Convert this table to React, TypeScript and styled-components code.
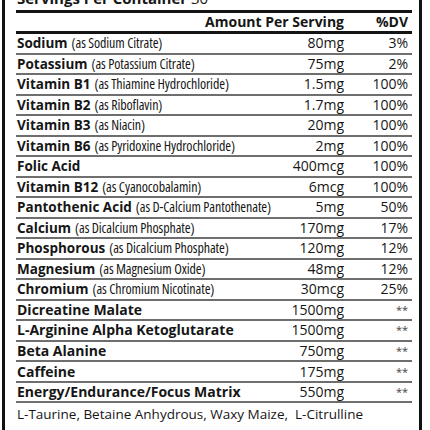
import styled, { createGlobalStyle } from "styled-components";

type Nutrient = {
  name: string;
  source?: string;
  amount: string;
  dv: string;
};

const nutrients: Nutrient[] = [
  { name: "Sodium", source: "(as Sodium Citrate)", amount: "80mg", dv: "3%" },
  { name: "Potassium", source: "(as Potassium Citrate)", amount: "75mg", dv: "2%" },
  { name: "Vitamin B1", source: "(as Thiamine Hydrochloride)", amount: "1.5mg", dv: "100%" },
  { name: "Vitamin B2", source: "(as Riboflavin)", amount: "1.7mg", dv: "100%" },
  { name: "Vitamin B3", source: "(as Niacin)", amount: "20mg", dv: "100%" },
  { name: "Vitamin B6", source: "(as Pyridoxine Hydrochloride)", amount: "2mg", dv: "100%" },
  { name: "Folic Acid", amount: "400mcg", dv: "100%" },
  { name: "Vitamin B12", source: "(as Cyanocobalamin)", amount: "6mcg", dv: "100%" },
  { name: "Pantothenic Acid", source: "(as D-Calcium Pantothenate)", amount: "5mg", dv: "50%" },
  { name: "Calcium", source: "(as Dicalcium Phosphate)", amount: "170mg", dv: "17%" },
  { name: "Phosphorous", source: "(as Dicalcium Phosphate)", amount: "120mg", dv: "12%" },
  { name: "Magnesium", source: "(as Magnesium Oxide)", amount: "48mg", dv: "12%" },
  { name: "Chromium", source: "(as Chromium Nicotinate)", amount: "30mcg", dv: "25%" },
];

const blends: Nutrient[] = [
  { name: "Dicreatine Malate", amount: "1500mg", dv: "**" },
  { name: "L-Arginine Alpha Ketoglutarate", amount: "1500mg", dv: "**" },
  { name: "Beta Alanine", amount: "750mg", dv: "**" },
  { name: "Caffeine", amount: "175mg", dv: "**" },
  { name: "Energy/Endurance/Focus Matrix", amount: "550mg", dv: "**" },
];

const GlobalStyle = createGlobalStyle`
  html, body {
    margin: 0;
    padding: 0;
    background: #ffffff;
    overflow: hidden;
  }
  body {
    font-family: "Open Sans", "Noto Sans", sans-serif;
    color: #161616;
  }
`;

const Label = () => (
  <Panel>
    <Servings>
      <ServingsText>
        <b>Servings Per Container</b> 30
      </ServingsText>
    </Servings>
    <ThickRule />
    <HeaderRow>
      <span />
      <HeadCell>Amount Per Serving</HeadCell>
      <HeadCell>%DV</HeadCell>
    </HeaderRow>
    <ThickRule />
    {nutrients.map(n => (
      <Row key={n.name}>
        <Name>
          {n.name}
          {n.source && <Source>{n.source}</Source>}
        </Name>
        <Amount>{n.amount}</Amount>
        <Dv>{n.dv}</Dv>
      </Row>
    ))}
    {blends.map(n => (
      <Row key={n.name}>
        <Name $blend>{n.name}</Name>
        <Amount>{n.amount}</Amount>
        <Dv $stars>{n.dv}</Dv>
      </Row>
    ))}
    <Footnote>
      L-Taurine, Betaine Anhydrous, Waxy Maize,&nbsp; L-Citrulline Malate,
      Glucuronolactone
    </Footnote>
  </Panel>
);

export default function App() {
  return (
    <>
      <GlobalStyle />
      <Label />
    </>
  );
}

const Panel = styled.div`
  box-sizing: border-box;
  width: 420px;
  min-height: 440px;
  margin-left: 2px;
  padding: 0 7px 0 11px;
  border-left: 3px solid #111;
  border-right: 3px solid #111;
  display: flex;
  flex-direction: column;

  > * {
    flex-shrink: 0;
  }
`;

const Servings = styled.div`
  height: 10px;
  overflow: hidden;
  padding-left: 1px;
`;

const ServingsText = styled.div`
  margin-top: -12px;
  font-size: 15px;
  line-height: 20px;
  white-space: pre;

  b {
    font-weight: 700;
  }
`;

const ThickRule = styled.div`
  height: 3px;
  background: #141414;
`;

const grid = `
  display: grid;
  grid-template-columns: minmax(0, 1fr) 170px 64px;
  padding-right: 4px;
  align-items: center;
`;

const HeaderRow = styled.div`
  ${grid}
  height: 18px;
`;

const HeadCell = styled.span`
  font-weight: 700;
  font-size: 14px;
  text-align: right;
  white-space: nowrap;
  line-height: 18px;
`;

const Row = styled.div`
  ${grid}
  box-sizing: border-box;
  height: 20.53px;
  border-bottom: 2px solid #6e6e6e;
`;

const Name = styled.span<{ $blend?: boolean }>`
  font-weight: 700;
  font-size: ${({ $blend }) => ($blend ? "14px" : "13.5px")};
  padding-left: 1px;
  white-space: nowrap;
  line-height: 18px;
`;

const Source = styled.span`
  font-weight: 400;
  font-size: 14px;
  font-stretch: 75%;
  margin-left: 4px;
  letter-spacing: -0.1px;
`;

const Amount = styled.span`
  font-size: 14px;
  text-align: right;
  white-space: nowrap;
  line-height: 18px;
`;

const Dv = styled.span<{ $stars?: boolean }>`
  font-size: ${({ $stars }) => ($stars ? "11px" : "14px")};
  color: ${({ $stars }) => ($stars ? "#444" : "inherit")};
  text-align: right;
  line-height: 18px;
`;

const Footnote = styled.p`
  margin: 1px 0 0 1px;
  font-size: 13.5px;
  line-height: 21px;
`;
